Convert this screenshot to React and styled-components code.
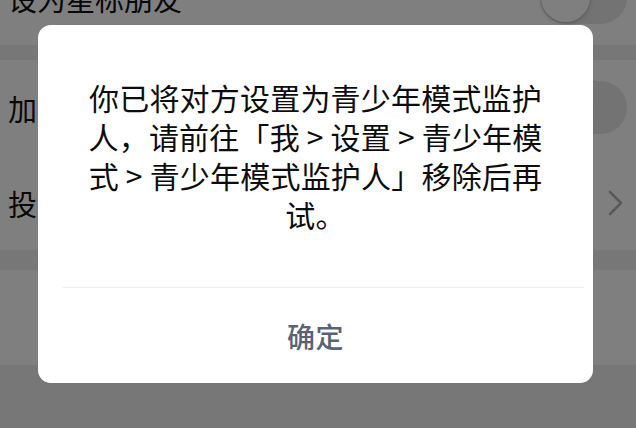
import React from "react";
import styled, { createGlobalStyle } from "styled-components";

const GlobalStyle = createGlobalStyle`
  html, body { margin: 0; padding: 0; }
  body {
    width: 636px;
    height: 428px;
    overflow: hidden;
    font-family: "Noto Sans CJK SC", "Noto Sans", sans-serif;
  }
`;

const Screen = styled.div`
  position: relative;
  width: 636px;
  height: 428px;
  overflow: hidden;
  background: #eeeeee;
`;

const List = styled.div`
  display: flex;
  flex-direction: column;
  margin-top: -50px;
`;

const Group = styled.div`
  display: flex;
  flex-direction: column;
  background: #ffffff;
  margin-bottom: ${(p) => p.$gap || 0}px;
`;

const Row = styled.div`
  height: 95px;
  display: flex;
  align-items: center;
  justify-content: space-between;
  padding: 0 9px 0 8px;
  box-sizing: border-box;
`;

const Label = styled.span`
  font-size: 29px;
  color: #111111;
  white-space: nowrap;
`;

const Switch = styled.div`
  position: relative;
  width: 87px;
  height: 53px;
  border-radius: 27px;
  background: #e6e6e6;
  box-sizing: border-box;
  flex-shrink: 0;
`;

const Knob = styled.div`
  position: absolute;
  left: 1px;
  top: 2px;
  width: 49px;
  height: 49px;
  border-radius: 50%;
  background: #ffffff;
  box-shadow: 0 2px 4px rgba(0, 0, 0, 0.18), 0 0 0 1px rgba(0, 0, 0, 0.04);
`;

const Chevron = styled.svg`
  width: 16px;
  height: 26px;
  margin-right: 3px;
  flex-shrink: 0;
`;

const Mask = styled.div`
  position: absolute;
  inset: 0;
  background: rgba(0, 0, 0, 0.5);
  display: flex;
  flex-direction: column;
  align-items: flex-start;
  padding: 25px 0 0 38px;
  box-sizing: border-box;
`;

const Dialog = styled.div`
  width: 555px;
  height: 358px;
  background: #ffffff;
  border-radius: 13px;
  display: flex;
  flex-direction: column;
  overflow: hidden;
`;

const Message = styled.div`
  flex: 1;
  padding: 53px 20px 0;
  text-align: center;
  font-size: 30px;
  line-height: 39px;
  color: #0d0d0d;
  letter-spacing: 0.2px;
`;

const Divider = styled.div`
  height: 1px;
  background: #ececec;
  margin: 0 9px 0 25px;
`;

const ConfirmButton = styled.div`
  height: 95px;
  display: flex;
  align-items: center;
  justify-content: center;
  font-size: 28px;
  font-weight: 500;
  color: #5a6375;
  letter-spacing: 0.5px;
`;

function SwitchOff() {
  return (
    <Switch>
      <Knob />
    </Switch>
  );
}

export default function App() {
  return (
    <>
      <GlobalStyle />
      <Screen>
        <List>
          <Group $gap={15}>
            <Row>
              <Label>设为星标朋友</Label>
              <SwitchOff />
            </Row>
          </Group>
          <Group $gap={20}>
            <Row>
              <Label>加入黑名单</Label>
              <SwitchOff />
            </Row>
            <Row>
              <Label>投诉</Label>
              <Chevron viewBox="0 0 16 26">
                <path
                  d="M2 2 L13 13 L2 24"
                  fill="none"
                  stroke="#b2b2b2"
                  strokeWidth="2.6"
                  strokeLinecap="round"
                  strokeLinejoin="round"
                />
              </Chevron>
            </Row>
          </Group>
          <Group>
            <Row />
          </Group>
        </List>
        <Mask>
          <Dialog>
            <Message>
              你已将对方设置为青少年模式监护
              <br />
              人，请前往「我 &gt; 设置 &gt; 青少年模
              <br />
              式 &gt; 青少年模式监护人」移除后再
              <br />
              试。
            </Message>
            <Divider />
            <ConfirmButton>确定</ConfirmButton>
          </Dialog>
        </Mask>
      </Screen>
    </>
  );
}
